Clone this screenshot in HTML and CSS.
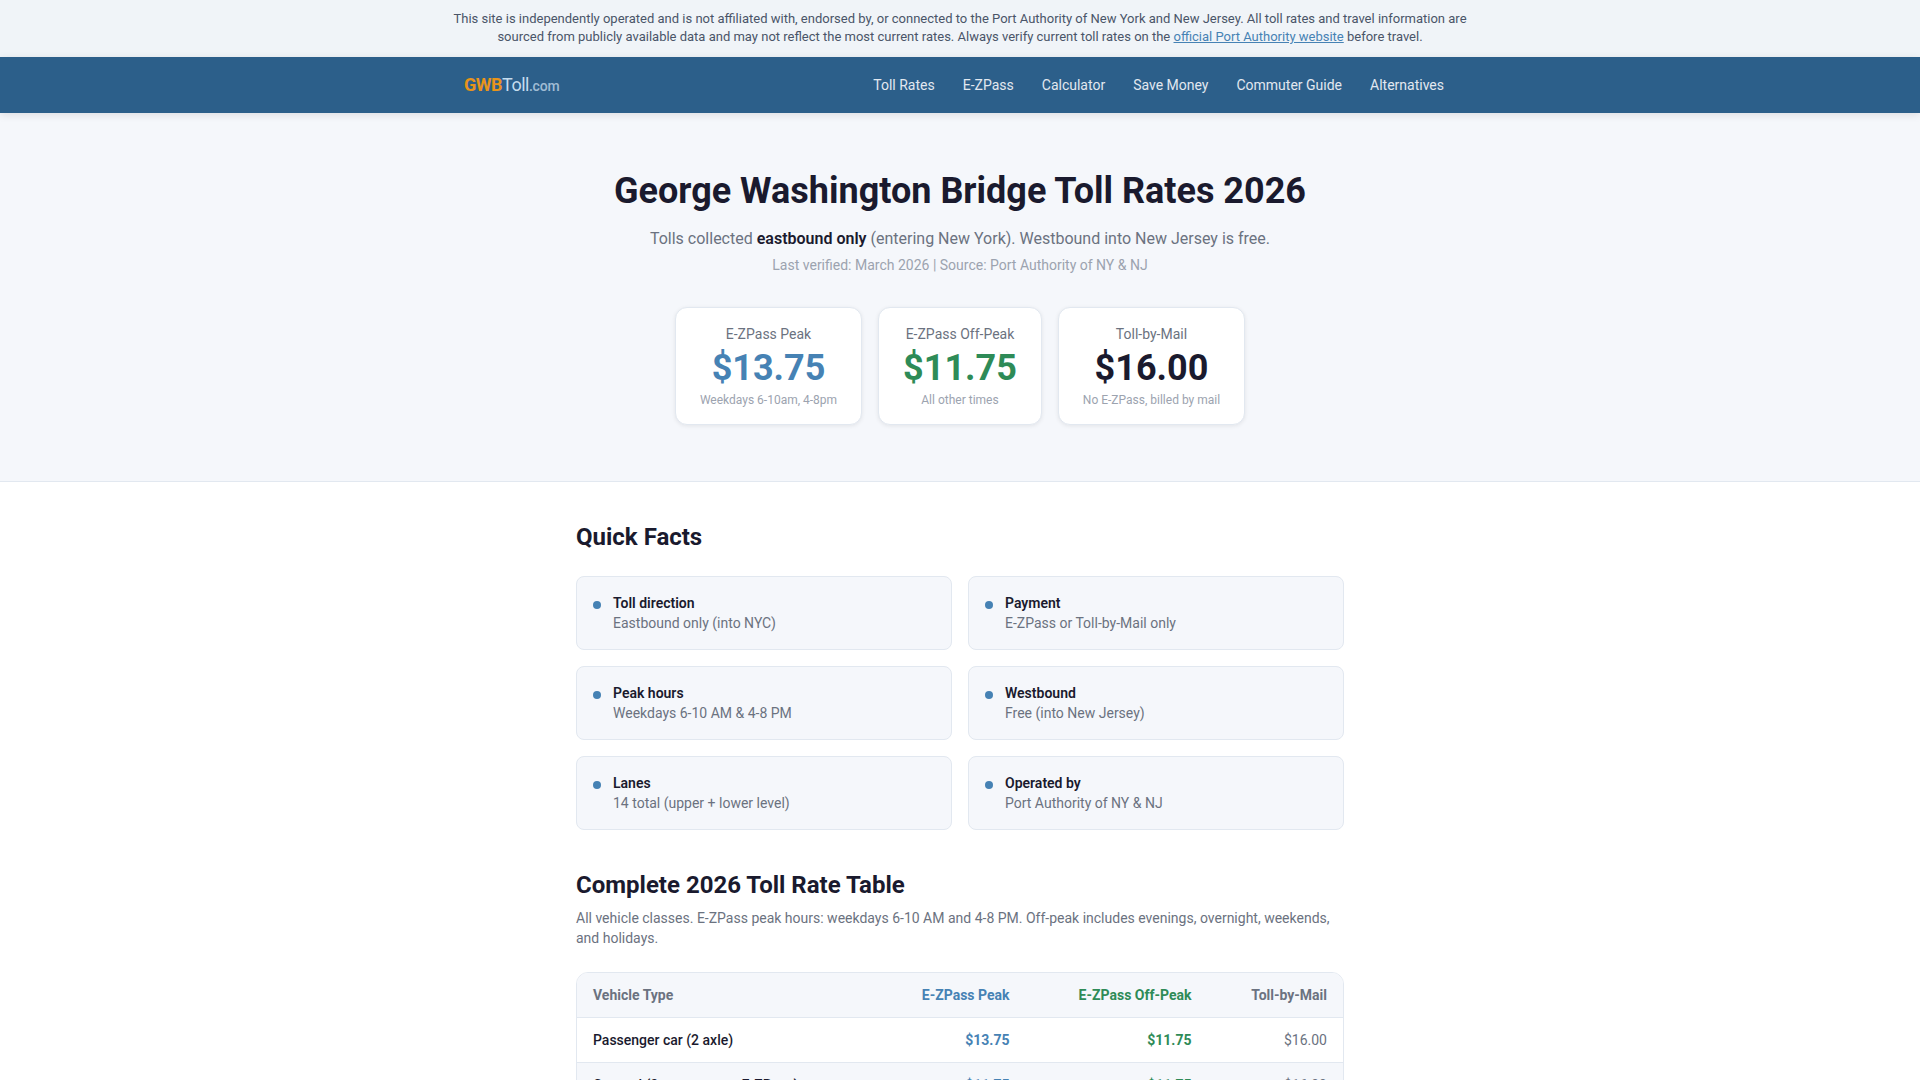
FILE: index.html
```html
<!DOCTYPE html>
<html lang="en">
<head>
    <meta charset="UTF-8">
    <meta name="viewport" content="width=device-width, initial-scale=1.0">
    <title>George Washington Bridge Toll Rates 2026</title>
    <link rel="stylesheet" href="styles.css">
</head>
<body>
    <div class="disclaimer">
        <p>This site is independently operated and is not affiliated with, endorsed by, or connected to the Port Authority of New York and New Jersey. All toll rates and travel information are sourced from publicly available data and may not reflect the most current rates. Always verify current toll rates on the <a href="#">official Port Authority website</a> before travel.</p>
    </div>

    <header class="site-header">
        <nav class="nav-inner">
            <a class="logo" href="#"><span class="logo-gwb">GWB</span>Toll<span class="logo-com">.com</span></a>
            <div class="nav-links">
                <a href="#">Toll Rates</a>
                <a href="#">E-ZPass</a>
                <a href="#">Calculator</a>
                <a href="#">Save Money</a>
                <a href="#">Commuter Guide</a>
                <a href="#">Alternatives</a>
            </div>
        </nav>
    </header>

    <section class="hero">
        <h1>George Washington Bridge Toll Rates 2026</h1>
        <p class="hero-sub">Tolls collected <strong>eastbound only</strong> (entering New York). Westbound into New Jersey is free.</p>
        <p class="hero-meta">Last verified: March 2026 | Source: Port Authority of NY &amp; NJ</p>
        <div class="rate-cards">
            <div class="rate-card">
                <div class="rate-label">E-ZPass Peak</div>
                <div class="rate-price peak">$13.75</div>
                <div class="rate-note">Weekdays 6-10am, 4-8pm</div>
            </div>
            <div class="rate-card">
                <div class="rate-label">E-ZPass Off-Peak</div>
                <div class="rate-price offpeak">$11.75</div>
                <div class="rate-note">All other times</div>
            </div>
            <div class="rate-card">
                <div class="rate-label">Toll-by-Mail</div>
                <div class="rate-price">$16.00</div>
                <div class="rate-note">No E-ZPass, billed by mail</div>
            </div>
        </div>
    </section>

    <main class="content">
        <h2>Quick Facts</h2>
        <div class="facts">
            <div class="fact"><span class="dot"></span><div><strong>Toll direction</strong><span>Eastbound only (into NYC)</span></div></div>
            <div class="fact"><span class="dot"></span><div><strong>Payment</strong><span>E-ZPass or Toll-by-Mail only</span></div></div>
            <div class="fact"><span class="dot"></span><div><strong>Peak hours</strong><span>Weekdays 6-10 AM &amp; 4-8 PM</span></div></div>
            <div class="fact"><span class="dot"></span><div><strong>Westbound</strong><span>Free (into New Jersey)</span></div></div>
            <div class="fact"><span class="dot"></span><div><strong>Lanes</strong><span>14 total (upper + lower level)</span></div></div>
            <div class="fact"><span class="dot"></span><div><strong>Operated by</strong><span>Port Authority of NY &amp; NJ</span></div></div>
        </div>

        <h2 class="table-title">Complete 2026 Toll Rate Table</h2>
        <p class="table-intro">All vehicle classes. E-ZPass peak hours: weekdays 6-10 AM and 4-8 PM. Off-peak includes evenings, overnight, weekends, and holidays.</p>

        <div class="table-wrap">
            <table class="rates">
                <thead>
                    <tr>
                        <th>Vehicle Type</th>
                        <th class="peak">E-ZPass Peak</th>
                        <th class="offpeak">E-ZPass Off-Peak</th>
                        <th>Toll-by-Mail</th>
                    </tr>
                </thead>
                <tbody>
                    <tr>
                        <td>Passenger car (2 axle)</td>
                        <td class="peak">$13.75</td>
                        <td class="offpeak">$11.75</td>
                        <td class="mail">$16.00</td>
                    </tr>
                    <tr>
                        <td>Carpool (3+ occupants, E-ZPass)</td>
                        <td class="peak">$11.75</td>
                        <td class="offpeak">$11.75</td>
                        <td class="mail">$16.00</td>
                    </tr>
                </tbody>
            </table>
        </div>
    </main>
</body>
</html>
```

FILE: styles.css
```css
* {
    margin: 0;
    padding: 0;
    box-sizing: border-box;
}

body {
    font-family: Roboto, 'Liberation Sans', sans-serif;
    background: #fff;
    color: #1a1a2e;
    line-height: 1.6;
}

a {
    text-decoration: none;
}

.disclaimer {
    background: #f0f4f8;
    padding: 10px 20px 11px;
    font-size: 13px;
    line-height: 18px;
    color: #4a5568;
    text-align: center;
}

.disclaimer p {
    max-width: 1040px;
    margin: 0 auto;
}

.disclaimer a {
    color: #4682b4;
    text-decoration: underline;
}

.site-header {
    background: #2c5f8a;
    box-shadow: 0 2px 8px rgba(0, 0, 0, 0.1);
    position: relative;
}

.nav-inner {
    max-width: 1000px;
    height: 56px;
    margin: 0 auto;
    padding: 0 16px 0 4px;
    display: flex;
    align-items: center;
    justify-content: space-between;
}

.logo {
    font-size: 18px;
    font-weight: 400;
    letter-spacing: -0.5px;
    color: #c5dcee;
}

.logo-gwb {
    color: #e8941a;
    font-weight: 700;
}

.logo-com {
    font-size: 14px;
    font-weight: 500;
    letter-spacing: -0.2px;
    color: #a0bcd4;
}

.nav-links {
    display: flex;
    gap: 28px;
}

.nav-links a {
    font-size: 14px;
    color: #e2e8f0;
}

.hero {
    background: #f5f7fb;
    border-bottom: 1px solid #e2e8f0;
    padding: 55px 20px 56px;
    text-align: center;
}

.hero h1 {
    font-size: 36px;
    line-height: 46px;
    font-weight: 700;
    margin-bottom: 11px;
}

.hero-sub {
    font-size: 16px;
    line-height: 27px;
    color: #6b7280;
}

.hero-sub strong {
    color: #1a1a2e;
    font-weight: 600;
}

.hero-meta {
    font-size: 14px;
    line-height: 22px;
    margin-top: 2px;
    color: #9ca3af;
}

.rate-cards {
    display: flex;
    justify-content: center;
    gap: 16px;
    margin-top: 31px;
}

.rate-card {
    background: #fff;
    border: 1px solid #e2e8f0;
    border-radius: 12px;
    box-shadow: 0 1px 4px rgba(0, 0, 0, 0.08);
    padding: 16px 24px 15px;
    text-align: center;
}

.rate-label {
    font-size: 14px;
    line-height: 21px;
    color: #6b7280;
}

.rate-price {
    font-size: 36px;
    line-height: 45px;
    margin-top: 1px;
    font-weight: 700;
}

.rate-note {
    font-size: 12px;
    line-height: 17px;
    margin-top: 1px;
    color: #9ca3af;
}

.peak {
    color: #4682b4;
}

.offpeak {
    color: #2e8b57;
}

.content {
    width: 768px;
    margin: 0 auto;
    padding-top: 40px;
}

h2 {
    font-size: 24px;
    line-height: 30px;
    font-weight: 700;
    margin-bottom: 24px;
}

.facts {
    display: grid;
    grid-template-columns: 1fr 1fr;
    gap: 16px;
}

.fact {
    display: flex;
    align-items: flex-start;
    gap: 12px;
    background: #f5f7fb;
    border: 1px solid #e2e8f0;
    border-radius: 8px;
    padding: 16px;
    font-size: 14px;
    line-height: 20px;
    color: #6b7280;
}

.fact strong {
    display: block;
    color: #1a1a2e;
    font-weight: 600;
}

.fact span {
    display: block;
}

.fact .dot {
    width: 8px;
    height: 8px;
    margin-top: 8px;
    flex-shrink: 0;
    border-radius: 50%;
    background: #4682b4;
}

.table-title {
    margin-top: 40px;
    margin-bottom: 8px;
}

.table-intro {
    font-size: 14px;
    line-height: 20px;
    color: #6b7280;
    margin-bottom: 24px;
}

.table-wrap {
    border: 1px solid #e2e8f0;
    border-radius: 12px;
    overflow: hidden;
}

.rates {
    width: 100%;
    border-collapse: collapse;
    font-size: 14px;
}

.rates th,
.rates td {
    padding: 12px 16px;
    line-height: 20px;
    text-align: right;
    border-bottom: 1px solid #e2e8f0;
}

.rates th:first-child,
.rates td:first-child {
    text-align: left;
}

.rates th {
    background: #f5f7fb;
    color: #6b7280;
    font-weight: 700;
}

.rates tbody tr:nth-child(even) {
    background: #f5f7fb;
}

.rates th.peak,
.rates td.peak {
    color: #4682b4;
}

.rates th.offpeak,
.rates td.offpeak {
    color: #2e8b57;
}

.rates td {
    font-weight: 700;
}

.rates td:first-child {
    font-weight: 500;
}

.rates td.mail {
    color: #6b7280;
    font-weight: 400;
}
```
